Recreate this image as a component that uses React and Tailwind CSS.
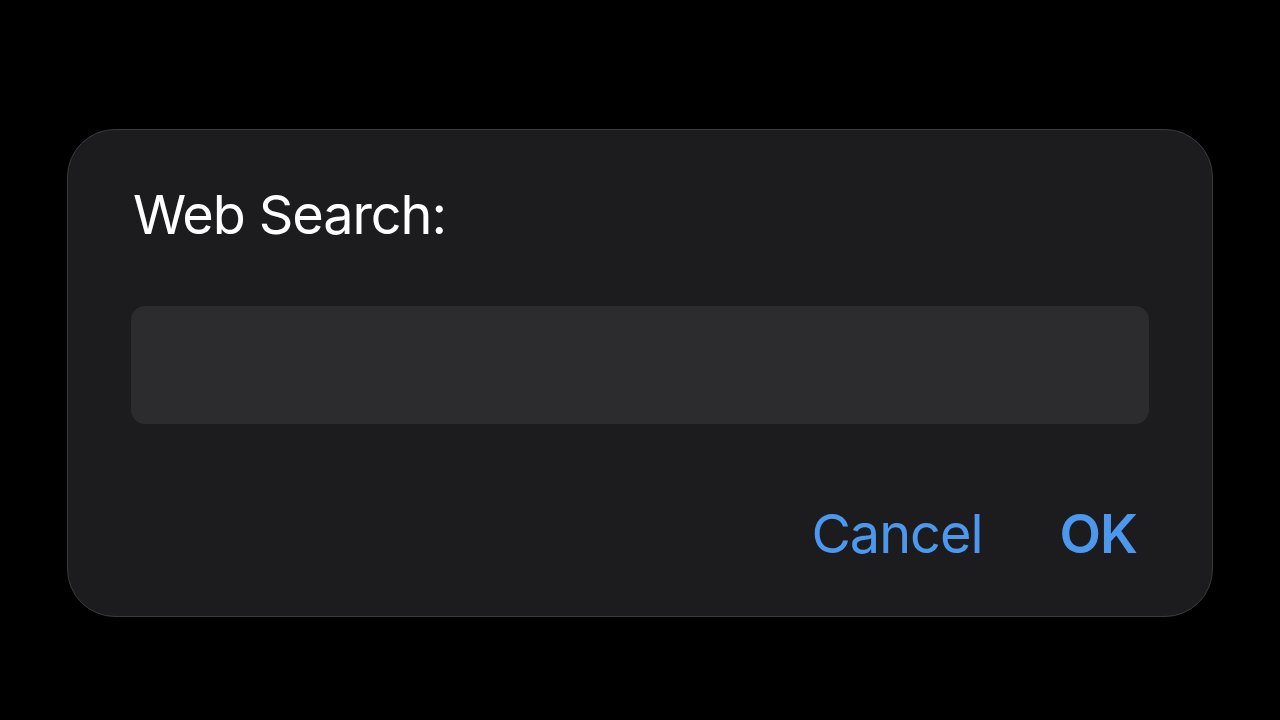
import React, { useState } from 'react';

const App = () => {
  const [query, setQuery] = useState('');

  return (
    <div
      className="w-[1280px] h-[720px] bg-black overflow-hidden pt-[129px] px-[67px]"
      style={{ fontFamily: 'Inter, "Noto Sans", sans-serif' }}
    >
      <div className="w-[1146px] h-[488px] bg-[#1c1c1e] border border-[#3a3a3c] rounded-[48px] px-[63px] pt-[53px] flex flex-col">
        {/* Title */}
        <h1 className="text-[54px] leading-[63px] text-white font-normal pl-[2px] tracking-[-1.1px]">
          Web Search:
        </h1>

        {/* Input */}
        <input
          type="text"
          value={query}
          onChange={(e) => setQuery(e.target.value)}
          className="mt-[60px] w-full h-[118px] bg-[#2c2c2e] rounded-[14px] px-6 text-[44px] text-white outline-none"
        />

        {/* Actions */}
        <div className="mt-[78px] flex justify-end items-center gap-[77px] pr-[12px]">
          <button className="text-[54px] leading-[63px] tracking-[-1px] text-[#4b98ee] font-normal">Cancel</button>
          <button className="text-[54px] leading-[63px] tracking-[-1px] text-[#4b98ee] font-semibold">OK</button>
        </div>
      </div>
    </div>
  );
};

export default App;
